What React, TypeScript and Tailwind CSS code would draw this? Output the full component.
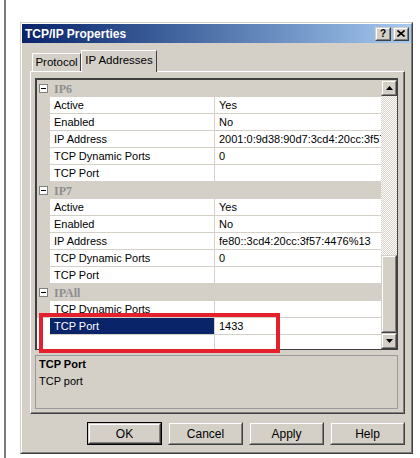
import type { ReactNode } from 'react'

const SANS = "font-['Liberation_Sans',Arial,sans-serif]"

type Row =
  | { kind: 'header'; label: string }
  | { kind: 'prop'; name: string; value: string; selected?: boolean; white?: boolean }

const ROWS: Row[] = [
  { kind: 'header', label: 'IP6' },
  { kind: 'prop', name: 'Active', value: 'Yes' },
  { kind: 'prop', name: 'Enabled', value: 'No' },
  { kind: 'prop', name: 'IP Address', value: '2001:0:9d38:90d7:3cd4:20cc:3f57:4476' },
  { kind: 'prop', name: 'TCP Dynamic Ports', value: '0' },
  { kind: 'prop', name: 'TCP Port', value: '' },
  { kind: 'header', label: 'IP7' },
  { kind: 'prop', name: 'Active', value: 'Yes' },
  { kind: 'prop', name: 'Enabled', value: 'No' },
  { kind: 'prop', name: 'IP Address', value: 'fe80::3cd4:20cc:3f57:4476%13' },
  { kind: 'prop', name: 'TCP Dynamic Ports', value: '0' },
  { kind: 'prop', name: 'TCP Port', value: '' },
  { kind: 'header', label: 'IPAll' },
  { kind: 'prop', name: 'TCP Dynamic Ports', value: '' },
  { kind: 'prop', name: 'TCP Port', value: '1433', selected: true, white: true },
  { kind: 'prop', name: '', value: '', white: true },
]

// classic raised 3d box
function Raised({ className, children }: { className?: string; children?: ReactNode }) {
  return (
    <div
      className={`flex border border-t-[#d4d0c8] border-l-[#d4d0c8] border-r-[#404040] border-b-[#404040] bg-[#d4d0c8] ${className ?? ''}`}
    >
      <div className="flex flex-1 items-center justify-center border border-t-white border-l-white border-r-[#808080] border-b-[#808080]">
        {children}
      </div>
    </div>
  )
}

function ScrollBtn({ dir }: { dir: 'up' | 'down' }) {
  return (
    <Raised className="h-[16px] w-[16px] shrink-0">
      <svg width="7" height="4" viewBox="0 0 7 4">
        <path d={dir === 'up' ? 'M3.5 0L7 4H0Z' : 'M0 0H7L3.5 4Z'} fill="#000" />
      </svg>
    </Raised>
  )
}

function MinusBox() {
  return (
    <div className="flex h-[9px] w-[9px] items-center justify-center border border-[#808080] bg-white">
      <div className="h-px w-[5px] bg-black" />
    </div>
  )
}

function GridRow({ row }: { row: Row }) {
  if (row.kind === 'header') {
    return (
      <div className="flex h-[17px] shrink-0 items-center bg-[#d4d0c8]">
        <div className="flex w-[13px] justify-start pl-[2px]">
          <MinusBox />
        </div>
        <div className="pl-[4px] font-['Liberation_Serif',serif] text-[12px] font-bold text-[#8e8e8e]">
          {row.label}
        </div>
      </div>
    )
  }
  return (
    <div className="flex h-[17px] shrink-0">
      <div className={`w-[13px] ${row.white ? 'bg-white' : 'bg-[#d4d0c8]'}`} />
      <div
        className={`flex w-[165px] items-center border-r border-b border-[#d4d0c8] pl-[4px] ${
          row.selected ? 'bg-[#0a246a] text-white' : 'bg-white'
        }`}
      >
        {row.name}
      </div>
      <div className="flex w-[166px] items-center overflow-hidden whitespace-nowrap border-b border-[#d4d0c8] bg-white pl-[4px]">
        {row.value}
      </div>
    </div>
  )
}

function PropertyGrid() {
  return (
    <div className="flex h-[272px] w-[363px] border-t-2 border-l-2 border-r border-b border-t-[#404040] border-l-[#404040] border-r-[#404040] border-b-[#404040]">
      <div className="flex w-[344px] flex-col overflow-hidden">
        {ROWS.map((r, i) => (
          <GridRow key={i} row={r} />
        ))}
      </div>
      <div className="flex w-[16px] flex-col">
        <ScrollBtn dir="up" />
        <div className="flex-1 bg-[image:repeating-conic-gradient(#ffffff_0_25%,#d4d0c8_0_50%)] bg-[length:2px_2px]" />
        <Raised className="h-[78px] w-[16px] shrink-0" />
        <ScrollBtn dir="down" />
      </div>
    </div>
  )
}

function Button({ label, isDefault }: { label: string; isDefault?: boolean }) {
  const inner = <Raised className="h-full w-full">{label}</Raised>
  if (isDefault) {
    return <div className="flex h-[23px] w-[75px] border border-black">{inner}</div>
  }
  return <div className="flex h-[23px] w-[75px]">{inner}</div>
}

function Dialog() {
  return (
    <div className="flex h-[432px] w-[393px] border border-t-[#d4d0c8] border-l-[#d4d0c8] border-r-[#404040] border-b-[#404040] bg-[#d4d0c8]">
      <div className="flex flex-1 flex-col border border-t-white border-l-white border-r-[#808080] border-b-[#808080]">
        {/* title bar */}
        <div className="flex h-[19px] shrink-0 items-center justify-between bg-gradient-to-r from-[#0a246a] to-[#a6caf0] pl-[3px] pr-[2px]">
          <span className="text-[12px] font-bold text-white">TCP/IP Properties</span>
          <div className="flex gap-[2px]">
            <Raised className="h-[14px] w-[16px]">
              <span className="text-[10px] font-bold leading-none">?</span>
            </Raised>
            <Raised className="h-[14px] w-[16px]">
              <svg width="8" height="7" viewBox="0 0 8 7">
                <path d="M0.5 0.5L7.5 6.5M7.5 0.5L0.5 6.5" stroke="#000" strokeWidth="1.6" />
              </svg>
            </Raised>
          </div>
        </div>

        <div className="mt-[7px] flex flex-col pl-[8px] pr-[6px]">
          {/* tabs */}
          <div className="flex h-[21px] items-end pl-[2px] text-[11.5px]">
            <div className="flex h-[18px] w-[49px] items-center justify-center border-t border-l border-r border-t-white border-l-white border-r-[#404040]">
              Protocol
            </div>
            <div className="relative z-10 -mb-px flex h-[22px] w-[76px] items-center justify-center border-t border-l border-r border-t-white border-l-white border-r-[#404040] bg-[#d4d0c8] pb-[2px]">
              IP Addresses
            </div>
          </div>

          {/* tab panel */}
          <div className="flex h-[343px] w-[375px] border border-t-white border-l-white border-r-[#404040] border-b-[#404040]">
            <div className="flex flex-1 flex-col border-r border-b border-r-[#808080] border-b-[#808080] pl-[4px] pt-[6px]">
              <PropertyGrid />
              <div className="mt-[5px] h-[54px] w-[363px] border border-[#9a9a9a] pl-[3px] leading-[17px]">
                <div className="font-bold">TCP Port</div>
                <div>TCP port</div>
              </div>
            </div>
          </div>

          {/* buttons */}
          <div className="mt-[8px] flex justify-end gap-[6px] text-[12px]">
            <Button label="OK" isDefault />
            <Button label="Cancel" />
            <Button label="Apply" />
            <Button label="Help" />
          </div>
        </div>
      </div>
    </div>
  )
}

export default function App() {
  return (
    <div className={`relative flex h-[458px] w-[420px] overflow-hidden bg-white text-[11px] text-black ${SANS}`}>
      <div className="w-[4px]" />
      <div className="w-[2px] bg-[#7a7a7a]" />
      <div className="w-[14px]" />
      <div className="pt-[22px]">
        <Dialog />
      </div>
      {/* red highlight annotation */}
      <div className="absolute left-[39px] top-[313px] h-[40px] w-[241px] border-[4px] border-[#e3202b]" />
    </div>
  )
}
